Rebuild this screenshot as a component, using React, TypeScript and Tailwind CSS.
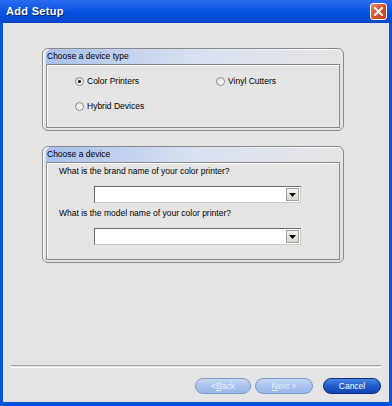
import React from 'react';

const font = { fontFamily: '"Liberation Sans", Arial, sans-serif' };

function Radio({ checked, label }: { checked?: boolean; label: string }) {
  return (
    <div className="flex items-center gap-[3px]">
      <div className="flex h-[9px] w-[9px] items-center justify-center rounded-full border border-[#8a8a8a] bg-gradient-to-br from-[#dcdcdc] to-white">
        {checked && <div className="h-[3px] w-[3px] rounded-full bg-black" />}
      </div>
      <span className="text-[8.5px] text-black">{label}</span>
    </div>
  );
}

function Combo() {
  return (
    <div className="ml-[35px] flex h-[17px] w-[207px] items-center justify-end border border-[#c8c8c0] border-t-[#6b6b6b] border-l-[#6b6b6b] bg-white pr-[1px]">
      <div className="flex h-[13px] w-[13px] items-center justify-center border border-[#a0a0a0] bg-gradient-to-b from-[#f4f4f0] to-[#d8d8d0]">
        <svg width="7" height="4" viewBox="0 0 7 4">
          <path d="M0 0h7L3.5 4z" fill="#000" />
        </svg>
      </div>
    </div>
  );
}

function Group({ title, children }: { title: string; children: React.ReactNode }) {
  return (
    <div className="w-[302px] rounded-[6px] border border-[#8a8a8a] px-[3px] pb-[2px] shadow-[inset_1px_1px_0_#fff]">
      <div className="h-[15px] rounded-tl-[5px] bg-gradient-to-r from-[#a9c0ec] via-[#d8e0f0] to-transparent pl-[1px] pt-[2px] text-[8.5px] leading-[10px] text-black">
        {title}
      </div>
      <div className="border border-[#8a8a8a] shadow-[inset_1px_1px_0_#fff]">{children}</div>
    </div>
  );
}

function XpButton({ label, disabled }: { label: React.ReactNode; disabled?: boolean }) {
  return disabled ? (
    <div className="flex h-[16px] items-center justify-center rounded-full border border-[#7b9ad0] bg-gradient-to-b from-[#c8d8f4] via-[#a9c3ee] to-[#9ab7ea] text-[8.5px] text-[#e6eefc]">
      {label}
    </div>
  ) : (
    <div className="flex h-[16px] items-center justify-center rounded-full border border-[#0a2c7c] bg-gradient-to-b from-[#4b86e0] via-[#1f5ccc] to-[#1247b3] text-[8.5px] text-white">
      {label}
    </div>
  );
}

export default function App() {
  return (
    <div style={font} className="flex h-[406px] w-[392px] flex-col bg-[#0a52d8]">
      {/* title bar */}
      <div className="flex h-[23px] items-center justify-between bg-gradient-to-b from-[#2a6cf0] via-[#0654e4] to-[#0846c8] pl-[6px] pr-[5px]">
        <span className="text-[11px] font-bold tracking-[0.3px] text-white [text-shadow:1px_1px_0_#0a246a]">Add Setup</span>
        <div className="flex h-[17px] w-[17px] items-center justify-center rounded-[3px] border border-white bg-gradient-to-br from-[#e88a6a] via-[#d6522c] to-[#c4421e]">
          <svg width="9" height="9" viewBox="0 0 9 9">
            <path d="M1 1l7 7M8 1L1 8" stroke="#fff" strokeWidth="2" strokeLinecap="square" />
          </svg>
        </div>
      </div>

      {/* body */}
      <div className="mx-[3px] mb-[4px] flex flex-1 flex-col bg-[#e4e4e4]">
        <div className="flex flex-col gap-[15px] pl-[39px] pt-[25px]">
          <Group title="Choose a device type">
            <div className="grid h-[62px] grid-cols-[141px_1fr] content-start gap-y-[12px] pl-[28px] pt-[10px]">
              <Radio checked label="Color Printers" />
              <Radio label="Vinyl Cutters" />
              <Radio label="Hybrid Devices" />
            </div>
          </Group>

          <Group title="Choose a device">
            <div className="flex h-[96px] flex-col pl-[12px] pt-[3px] text-[8.5px] text-black">
              <span className="h-[10px] leading-[10px]">What is the brand name of your color printer?</span>
              <div className="mt-[10px]">
                <Combo />
              </div>
              <span className="mt-[5px] h-[10px] leading-[10px]">What is the model name of your color printer?</span>
              <div className="mt-[10px]">
                <Combo />
              </div>
            </div>
          </Group>
        </div>

        <div className="flex-1" />
        <div className="mx-[8px] h-[2px] border-t border-[#a8a8a0] shadow-[0_1px_0_#fff]" />
        <div className="flex justify-end gap-[4px] pb-[8px] pr-[8px] pt-[11px]">
          <div className="w-[56px]">
            <XpButton disabled label={<>&lt; <u>B</u>ack</>} />
          </div>
          <div className="mr-[6px] w-[58px]">
            <XpButton disabled label={<><u>N</u>ext &gt;</>} />
          </div>
          <div className="w-[58px]">
            <XpButton label="Cancel" />
          </div>
        </div>
      </div>
    </div>
  );
}
